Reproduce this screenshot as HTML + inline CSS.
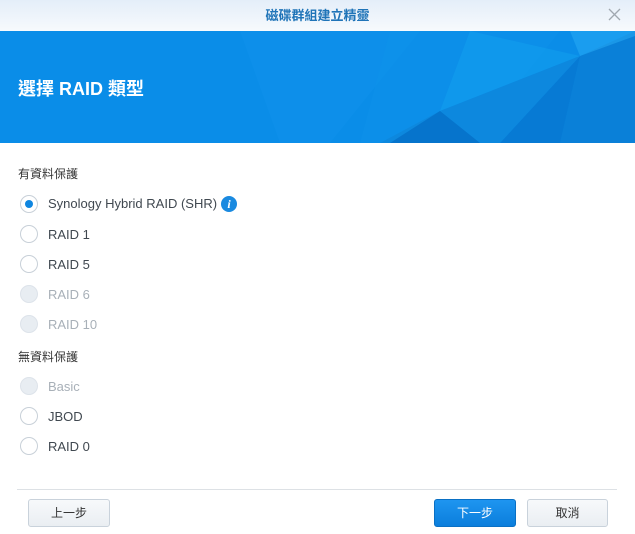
<!DOCTYPE html>
<html><head><meta charset="utf-8"><style>
*{margin:0;padding:0;box-sizing:border-box}
body{width:635px;height:534px;overflow:hidden;background:#fff;font-family:"Liberation Sans","Noto Sans CJK TC",sans-serif;position:relative}
.tb{position:absolute;left:0;top:0;width:635px;height:31px;background:linear-gradient(#e4eef9,#f7fafd);text-align:center;line-height:31px;color:#1f74b8;font-size:13px;font-weight:bold}
.x{position:absolute;right:14px;top:8px}
.bn{position:absolute;left:0;top:31px;width:635px;height:112px;background:#0a8de8;overflow:hidden}
.bn h1{position:absolute;left:18px;top:44px;color:#fff;font-size:18px;font-weight:bold}
.sec{position:absolute;left:18px;font-size:12px;color:#333}
.r{position:absolute;left:20px;width:18px;height:18px;border-radius:50%;border:1px solid #c8d0d8;background:#fff}
.r.d{background:#e8edf2;border-color:#dde3ea}
.r.on::after{content:"";position:absolute;left:4px;top:4px;width:8px;height:8px;border-radius:50%;background:#0f86e0}
.l{position:absolute;left:48px;font-size:13px;color:#404850}
.l.d{color:#a8b0b8}
.info{position:absolute;left:221px;top:196px;width:16px;height:16px;border-radius:50%;background:#1a8ae0;color:#fff;font-size:12px;font-style:italic;font-weight:bold;text-align:center;line-height:16px;font-family:"Liberation Serif",serif}
.line{position:absolute;left:17px;top:489px;width:600px;height:1px;background:#dde1e5}
.b{position:absolute;top:499px;height:28px;border:1px solid #c9d2db;border-radius:3px;background:linear-gradient(#f7f9fb,#eaeef2);font-size:12px;color:#333;text-align:center;line-height:26px}
.b.p{background:linear-gradient(#1e95f0,#0b7edc);border-color:#0a70c4;color:#fff}
</style></head><body>
<div class="tb">磁碟群組建立精靈<svg class="x" width="13" height="13"><path d="M1 1L12 12M12 1L1 12" stroke="#a0a8b0" stroke-width="1.3"/></svg></div>
<div class="bn">
<svg width="635" height="112" style="position:absolute;left:0;top:0">
<polygon points="240,0 420,0 330,112 280,112" fill="#1596ee" opacity=".35"/>
<polygon points="390,0 560,0 470,112 360,112" fill="#0f93ea" opacity=".4"/>
<polygon points="470,0 580,25 440,80" fill="#14a3f0" opacity=".45"/>
<polygon points="580,25 635,0 635,112 560,112" fill="#0a80d8"/>
<polygon points="580,25 500,112 560,112" fill="#0672cc" opacity=".7"/>
<polygon points="440,80 580,25 500,112 380,112" fill="#0d88de"/>
<polygon points="390,112 440,80 480,112" fill="#0674cc"/>
<polygon points="570,0 635,0 635,5 580,25" fill="#2aaef5" opacity=".5"/>
</svg>
<h1>選擇 RAID 類型</h1></div>
<div class="sec" style="top:165px">有資料保護</div>
<div class="r on" style="top:195px"></div><div class="l" style="top:196px">Synology Hybrid RAID (SHR)</div><div class="info">i</div>
<div class="r" style="top:225px"></div><div class="l" style="top:227px">RAID 1</div>
<div class="r" style="top:255px"></div><div class="l" style="top:257px">RAID 5</div>
<div class="r d" style="top:285px"></div><div class="l d" style="top:287px">RAID 6</div>
<div class="r d" style="top:315px"></div><div class="l d" style="top:317px">RAID 10</div>
<div class="sec" style="top:348px">無資料保護</div>
<div class="r d" style="top:377px"></div><div class="l d" style="top:379px">Basic</div>
<div class="r" style="top:407px"></div><div class="l" style="top:409px">JBOD</div>
<div class="r" style="top:437px"></div><div class="l" style="top:439px">RAID 0</div>
<div class="line"></div>
<div class="b" style="left:28px;width:82px">上一步</div>
<div class="b p" style="left:434px;width:82px">下一步</div>
<div class="b" style="left:527px;width:81px">取消</div>
</body></html>
